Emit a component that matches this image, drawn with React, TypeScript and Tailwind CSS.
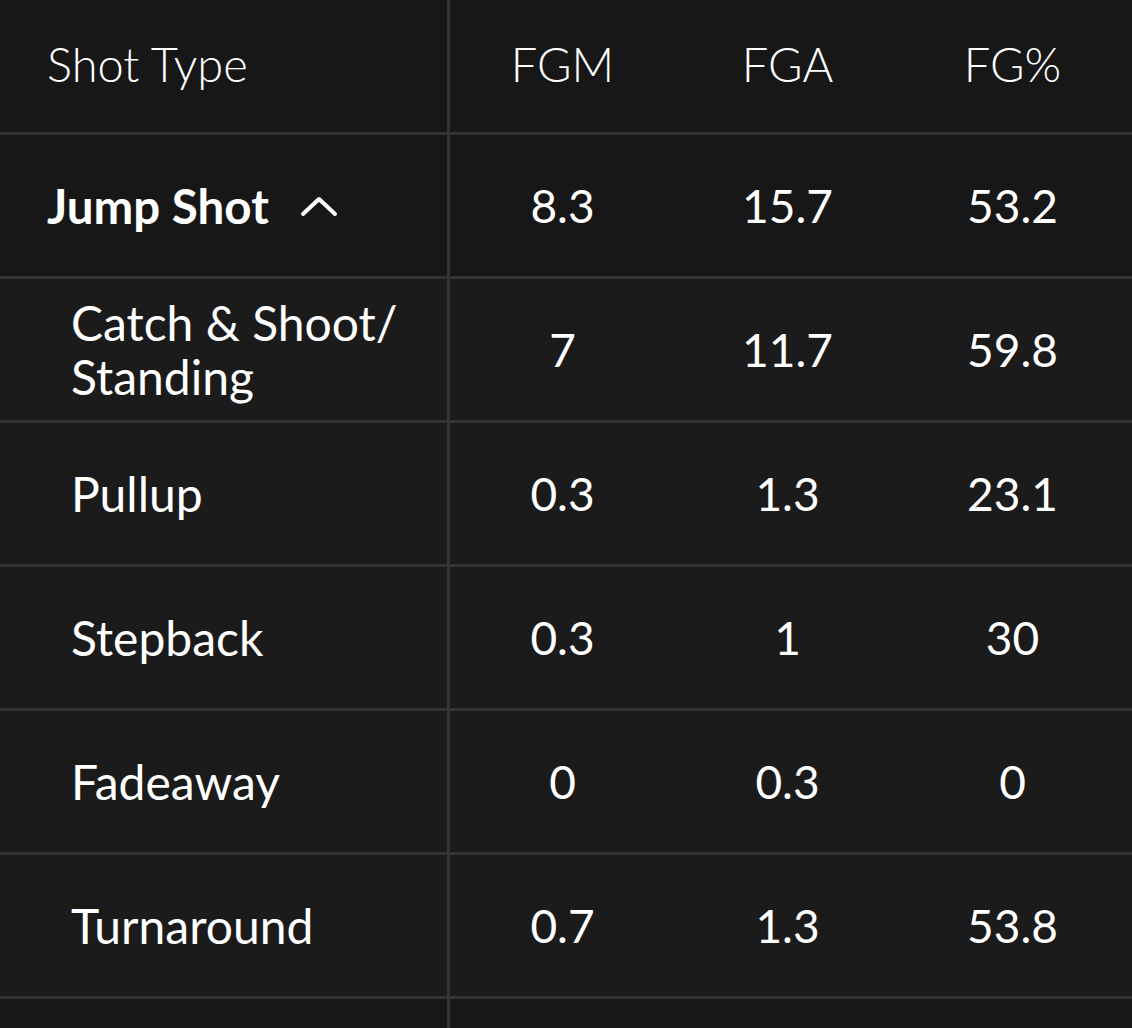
import React from "react";

type Row = { name: string; fgm: string; fga: string; pct: string; sub?: boolean; bold?: boolean; multi?: string[] };

const rows: Row[] = [
  { name: "Jump Shot", fgm: "8.3", fga: "15.7", pct: "53.2", bold: true },
  { name: "Catch & Shoot/ Standing", multi: ["Catch & Shoot/", "Standing"], fgm: "7", fga: "11.7", pct: "59.8", sub: true },
  { name: "Pullup", fgm: "0.3", fga: "1.3", pct: "23.1", sub: true },
  { name: "Stepback", fgm: "0.3", fga: "1", pct: "30", sub: true },
  { name: "Fadeaway", fgm: "0", fga: "0.3", pct: "0", sub: true },
  { name: "Turnaround", fgm: "0.7", fga: "1.3", pct: "53.8", sub: true },
];

function Chevron() {
  return (
    <svg width="38" height="24" viewBox="0 0 38 24" className="ml-[31px]" fill="none">
      <polyline points="3,20 19,5 35,20" stroke="#ffffff" strokeWidth="4" strokeLinecap="round" strokeLinejoin="round" />
    </svg>
  );
}

export default function App() {
  const font = { fontFamily: "Lato, 'Open Sans', sans-serif" };
  return (
    <div className="w-[1132px] h-[1028px] overflow-hidden bg-[#171717] text-white" style={font}>
      <div className="grid grid-cols-[450px_225px_225px_225px_7px] h-[135px] border-b-[3px] border-[#333333] bg-[#171717]">
        <div className="flex items-center pl-[47px] pb-[4px] border-r-[3px] border-[#333333] text-[47px] font-light">Shot Type</div>
        <div className="flex items-center justify-center pb-[4px] text-[47px] font-light">FGM</div>
        <div className="flex items-center justify-center pb-[4px] text-[47px] font-light">FGA</div>
        <div className="flex items-center justify-center pb-[4px] text-[47px] font-light">FG%</div>
        <div />
      </div>
      {rows.map((r) => (
        <div
          key={r.name}
          className={
            "grid grid-cols-[450px_225px_225px_225px_7px] h-[144px] border-b-[3px] border-[#333333] " +
            (r.sub ? "bg-[#1b1b1b]" : "bg-[#171717]")
          }
        >
          <div
            className={
              "flex items-center border-r-[3px] border-[#333333] " +
              (r.sub ? "pl-[71px] font-normal text-[48px]" : "pl-[47px] font-bold text-[47.5px]")
            }
          >
            {r.multi ? (
              <div className="leading-[54px]">
                {r.multi.map((m) => (
                  <div key={m}>{m}</div>
                ))}
              </div>
            ) : (
              <span>{r.name}</span>
            )}
            {r.bold && <Chevron />}
          </div>
          <div className="flex items-center justify-center text-[46px]">{r.fgm}</div>
          <div className="flex items-center justify-center text-[46px]">{r.fga}</div>
          <div className="flex items-center justify-center text-[46px]">{r.pct}</div>
          <div />
        </div>
      ))}
      <div className="grid grid-cols-[450px_225px_225px_225px_7px] h-[144px] bg-[#171717]">
        <div className="border-r-[3px] border-[#333333]" />
        <div />
        <div />
        <div />
        <div />
      </div>
    </div>
  );
}
